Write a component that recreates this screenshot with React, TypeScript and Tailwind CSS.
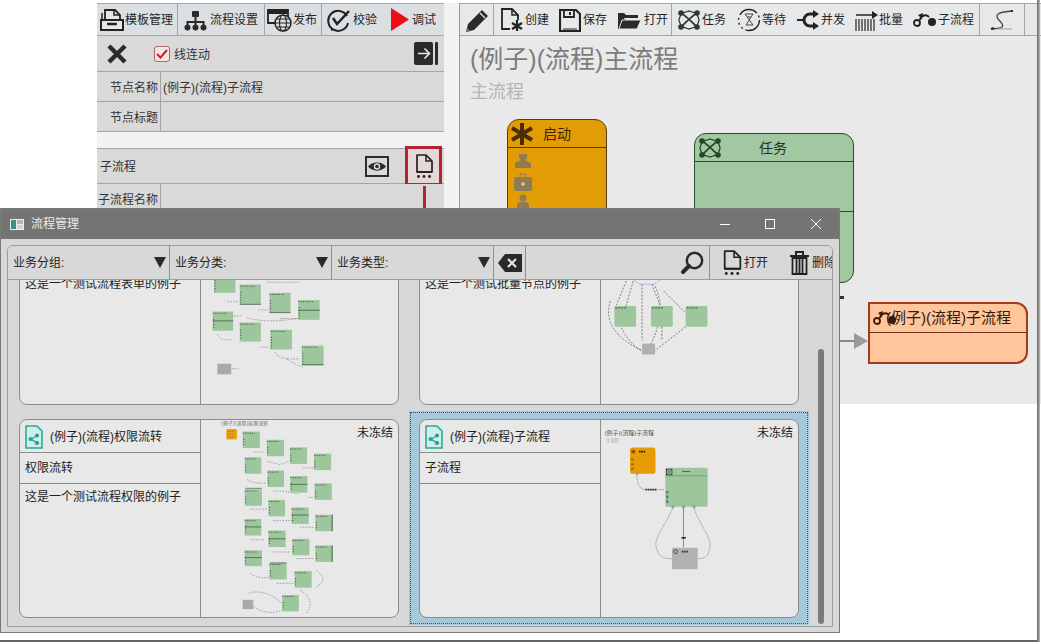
import React from 'react';

const FONT = 'font-["Liberation_Sans","Noto_Sans_CJK_SC",sans-serif]';

const S = ({ w, h, vb, children, className = '' }: { w: number; h: number; vb?: string; children: React.ReactNode; className?: string }) => (
  <svg width={w} height={h} viewBox={vb ?? `0 0 ${w} ${h}`} className={`shrink-0 ${className}`}>{children}</svg>
);

const IconTemplate = () => (
  <S w={24} h={24}>
    <path d="M5 12V2h10l5 5v5" fill="#e6e6e6" stroke="#222" strokeWidth="1.8" />
    <path d="M2 5v7M14 2v5h6" fill="none" stroke="#222" strokeWidth="1.5" />
    <path d="M1 12h22v10H1z" fill="#e6e6e6" stroke="#222" strokeWidth="2" />
    <path d="M7 16h10" stroke="#222" strokeWidth="2.5" />
  </S>
);
const IconOrg = () => (
  <S w={23} h={22}>
    <rect x="8" y="2" width="7" height="6" rx="1" fill="#2a2a2a" />
    <path d="M11.500 8v5M3.500 16v-3h16v3M11.500 13v3" fill="none" stroke="#2a2a2a" strokeWidth="2" />
    <circle cx="3.500" cy="18.500" r="3" fill="#2a2a2a" />
    <circle cx="11.500" cy="18.500" r="3" fill="#2a2a2a" />
    <circle cx="19.500" cy="18.500" r="3" fill="#2a2a2a" />
  </S>
);
const IconPublish = () => (
  <S w={25} h={24}>
    <path d="M8 15H1V2h20v7" fill="none" stroke="#222" strokeWidth="1.800" />
    <path d="M1 4.500h20" stroke="#222" strokeWidth="3" />
    <circle cx="16" cy="15" r="8" fill="#dcdcdc" stroke="#222" strokeWidth="1.500" />
    <ellipse cx="16" cy="15" rx="3.500" ry="8" fill="none" stroke="#222" strokeWidth="1.100" />
    <path d="M8 15h16M9.500 11h13M9.500 19h13" stroke="#222" strokeWidth="1.100" />
  </S>
);
const IconCheck = () => (
  <S w={25} h={24}>
    <path d="M21 8A10 10 0 1 0 22 15" fill="none" stroke="#222" strokeWidth="2" />
    <path d="M7 10l4 6L23 3" fill="none" stroke="#222" strokeWidth="2.500" />
    <path d="M5 20l3 2-3 1z" fill="#222" />
  </S>
);
const IconPlay = () => <S w={18} h={23}><path d="M0 0l18 11.500L0 23z" fill="#ee0a16" /></S>;
const IconX = ({ size = 22, color = '#2b2b2b' }: { size?: number; color?: string }) => (
  <S w={size} h={size} vb="0 0 22 22"><path d="M3 3l16 16M19 3L3 19" stroke={color} strokeWidth="4.500" /></S>
);
const IconExit = () => (
  <S w={24} h={23}>
    <rect x="0" y="0" width="19" height="23" rx="2" fill="#2a2a2a" />
    <rect x="21" y="0" width="3" height="23" rx="1" fill="#2a2a2a" />
    <path d="M4 11.500h11M10.500 6.500l5 5-5 5" fill="none" stroke="#e8e8e8" strokeWidth="1.600" />
  </S>
);
const IconEye = () => (
  <S w={24} h={21}>
    <rect x="0" y="0" width="24" height="21" fill="#2c2c2c" />
    <rect x="2" y="2" width="20" height="17" fill="#d9d9d9" />
    <path d="M3 10.500C7 5 17 5 21 10.500 17 16 7 16 3 10.500z" fill="#2c2c2c" />
    <circle cx="12" cy="10.500" r="3.200" fill="#d9d9d9" />
    <circle cx="12" cy="10.500" r="1.800" fill="#2c2c2c" />
  </S>
);
const IconFileDots = ({ w = 18, h = 24 }: { w?: number; h?: number }) => (
  <S w={w} h={h} vb="0 0 18 24">
    <path d="M2 18V1h9l6 6v11z" fill="none" stroke="#222" strokeWidth="1.700" strokeLinejoin="round" />
    <path d="M11 1v6h6" fill="none" stroke="#222" strokeWidth="1.500" />
    <path d="M2 18h15" stroke="#222" strokeWidth="1.700" />
    <circle cx="3.500" cy="22.500" r="1.400" fill="#222" />
    <circle cx="9" cy="22.500" r="1.400" fill="#222" />
    <circle cx="14.500" cy="22.500" r="1.400" fill="#222" />
  </S>
);
const IconPencil = () => (
  <S w={24} h={26}>
    <path d="M1 25l2-8L17 3l6 6L9 23z" fill="#2c2c2c" />
    <path d="M15 6l5 5" stroke="#e8e8e8" strokeWidth="1.200" />
    <path d="M1 25l1-4 3 3z" fill="#777" />
  </S>
);
const IconCreate = () => (
  <S w={22} h={24}>
    <path d="M9 21H1V1h10l6 6v5" fill="none" stroke="#222" strokeWidth="1.800" />
    <path d="M11 1v6h6" fill="none" stroke="#222" strokeWidth="1.500" />
    <path d="M16 12v11M11 15l10 6M21 15l-10 6" stroke="#222" strokeWidth="2.200" />
  </S>
);
const IconSave = () => (
  <S w={22} h={24}>
    <path d="M1 2h16l4 4v17H1z" fill="none" stroke="#222" strokeWidth="2.200" />
    <path d="M5 2h10v7H5z" fill="none" stroke="#222" strokeWidth="1.800" />
    <path d="M11 4v3" stroke="#222" strokeWidth="2" />
    <path d="M4 21h14" stroke="#222" strokeWidth="1" />
  </S>
);
const IconOpen = () => (
  <S w={25} h={22}>
    <path d="M1 5V20h19l1-9H9" fill="#2a2a2a" />
    <path d="M1 10V4h6l2 2h12v3H7L4 20H1z" fill="#2a2a2a" />
    <path d="M5 11h19l-4 9H2z" fill="#2a2a2a" stroke="#e5e7e9" strokeWidth="1" />
  </S>
);
const IconTask = ({ size = 24, color = '#2b3b2f' }: { size?: number; color?: string }) => (
  <S w={size} h={size} vb="0 0 24 24">
    <path d="M4 5C9 8 15 14 20 19M20 5C15 8 9 14 4 19" fill="none" stroke={color} strokeWidth="1.800" />
    <path d="M4 5c4 0 7-2 8-2s4 2 8 2M4 19c4 0 7 2 8 2s4-2 8-2M4 5c0 3-2 5-2 7s2 4 2 7M20 5c0 3 2 5 2 7s-2 4-2 7" fill="none" stroke={color} strokeWidth="1.300" />
    <circle cx="4" cy="5" r="2.800" fill={color} /><circle cx="20" cy="5" r="2.800" fill={color} />
    <circle cx="4" cy="19" r="2.800" fill={color} /><circle cx="20" cy="19" r="2.800" fill={color} />
  </S>
);
const IconWait = () => (
  <S w={24} h={24}>
    <circle cx="12" cy="12" r="10.500" fill="none" stroke="#222" strokeWidth="1.300" strokeDasharray="20 3 2 3 2 3 2 3" />
    <path d="M8 6h8L9 17h7" fill="none" stroke="#444" strokeWidth="1" />
    <path d="M8 6l8 11" fill="none" stroke="#444" strokeWidth="1" />
    <path d="M10 8h4l-2 3z" fill="#888" />
  </S>
);
const IconFork = () => (
  <S w={24} h={22}>
    <path d="M1 11h7" stroke="#222" strokeWidth="2" />
    <path d="M18 5h-4a6 6 0 0 0 0 12h4" fill="none" stroke="#222" strokeWidth="3" />
    <path d="M17 1l6 4-6 4zM17 13l6 4-6 4z" fill="#222" />
  </S>
);
const IconBatch = () => (
  <S w={24} h={24}>
    <path d="M2 7h18" stroke="#222" strokeWidth="1.500" />
    <path d="M18 3l6 4-6 4z" fill="#222" />
    <path d="M2 11v12M5 11v12M8 11v12M11 11v12M14 11v12M17 11v12M20 11v12" stroke="#333" strokeWidth="1.300" />
  </S>
);
const IconSub = ({ color = '#222' }: { color?: string }) => (
  <S w={24} h={16}>
    <circle cx="4" cy="11" r="3" fill="none" stroke={color} strokeWidth="1.800" />
    <path d="M7 8C8 3 13 2 16 5" fill="none" stroke={color} strokeWidth="2" />
    <path d="M10 1L5 3l4 4z" fill={color} />
    <circle cx="19" cy="10" r="4" fill={color} />
  </S>
);
const IconCurve = () => (
  <S w={24} h={24}>
    <path d="M2 21C14 20 16 19 8 11 4 5 12 4 22 3" fill="none" stroke="#444" strokeWidth="1.300" />
    <path d="M1 21l3-1M21 3l2 0" stroke="#222" strokeWidth="2" />
    <path d="M8 21h14" stroke="#999" strokeWidth="1" />
  </S>
);
const IconAsterisk = () => (
  <S w={24} h={24}>
    <path d="M12 1v22M2 6l20 12M22 6L2 18" stroke="#4b2d05" strokeWidth="4" />
  </S>
);
const IconSearch = () => (
  <S w={24} h={24}>
    <circle cx="14.500" cy="9.500" r="7.700" fill="none" stroke="#2a2a2a" strokeWidth="2.500" />
    <path d="M9 15l-6 6" stroke="#2a2a2a" strokeWidth="4" strokeLinecap="round" />
  </S>
);
const IconTrash = () => (
  <S w={19} h={24}>
    <path d="M0 5h19M6 4V1h7v3" fill="none" stroke="#222" strokeWidth="2" />
    <path d="M2.500 7h14v16h-14z" fill="none" stroke="#222" strokeWidth="1.800" />
    <path d="M6.500 8v14M9.500 8v14M12.500 8v14" stroke="#222" strokeWidth="1.800" />
  </S>
);
const IconBackspace = () => (
  <S w={24} h={18}>
    <path d="M7 0h17v18H7L0 9z" fill="#2a2a2a" />
    <path d="M10 5l8 8M18 5l-8 8" stroke="#e8e8e8" strokeWidth="2" />
  </S>
);
const IconDocShare = () => (
  <S w={18} h={24}>
    <path d="M1 1h11l5 5v17H1z" fill="#cfeee9" stroke="#2ba89a" strokeWidth="1.600" />
    <path d="M12 11l-6 3 6 4" fill="none" stroke="#20a090" strokeWidth="1.300" />
    <circle cx="12" cy="10.500" r="2" fill="#20a090" /><circle cx="5.500" cy="14" r="2" fill="#20a090" /><circle cx="12" cy="18" r="2" fill="#20a090" />
  </S>
);
const IconApp = () => (
  <S w={14} h={11}>
    <rect width="14" height="11" fill="#e9eef0" />
    <rect x="1" y="1" width="5" height="9" fill="#3e8e8a" />
    <rect x="7" y="1" width="6" height="4" fill="#a9b6bd" />
    <rect x="7" y="6" width="6" height="4" fill="#c9d3d8" />
  </S>
);
const IconDropdown = () => <S w={12} h={11}><path d="M0 0h12L6 11z" fill="#2b2b2b" /></S>;

const ToolItem = ({ icon, label, gap = 'gap-[2px]' }: { icon: React.ReactNode; label: string; gap?: string }) => (
  <div className={`flex items-center ${gap} whitespace-nowrap text-xs text-[#262626]`}>
    {icon}
    <span>{label}</span>
  </div>
);

const Row = ({ label, value, h }: { label: string; value?: string; h: string }) => (
  <div className={`flex ${h} items-center border-b border-[#a5a5a5] text-xs text-[#333]`}>
    <div className="flex h-full w-[64px] items-center justify-end border-r border-[#a5a5a5] pr-[2px] pt-[2px]">{label}</div>
    <div className="pl-[2px] pt-[2px]">{value}</div>
  </div>
);

const LeftPanel = () => (
  <div className="flex w-[347px] shrink-0 flex-col">
    <div className="flex h-[33px] items-center border-y border-[#a5a5a5] bg-[#dcdfe2]">
      <div className="flex h-full w-[81px] items-center border-r border-[#a5a5a5] pl-[3px]"><ToolItem icon={<IconTemplate />} label="模板管理" gap="gap-[1px]" /></div>
      <div className="flex h-full w-[87px] items-center border-r border-[#a5a5a5] pl-[6px]"><ToolItem icon={<IconOrg />} label="流程设置" gap="gap-[3px]" /></div>
      <div className="flex h-full w-[57px] items-center border-r border-[#a5a5a5] pl-[2px]"><ToolItem icon={<IconPublish />} label="发布" gap="gap-[1px]" /></div>
      <div className="flex h-full flex-1 items-center gap-[14px] pl-[4px]">
        <ToolItem icon={<IconCheck />} label="校验" />
        <ToolItem icon={<IconPlay />} label="调试" gap="gap-[3px]" />
      </div>
    </div>
    <div className="flex h-[36px] items-center border-b border-[#a5a5a5] bg-[#d9d9d9] pl-[9px] pr-[6px] text-xs text-[#333]">
      <IconX />
      <div className="ml-[26px] flex h-[16px] w-[16px] items-center justify-center rounded-[3px] border border-[#a86a6a] bg-[#f4e4e4]">
        <svg width="12" height="10" viewBox="0 0 12 10"><path d="M1 5l3.500 3.500L11 1" fill="none" stroke="#d0202c" strokeWidth="2" /></svg>
      </div>
      <span className="ml-[4px] pt-[3px]">线连动</span>
      <div className="ml-auto"><IconExit /></div>
    </div>
    <div className="bg-[#d9d9d9]">
      <Row label="节点名称" value="(例子)(流程)子流程" h="h-[30px]" />
      <Row label="节点标题" h="h-[30px]" />
    </div>
    <div className="h-[16px] bg-[#f2f2f2]" />
    <div className="flex h-[36px] items-center border-y border-[#a5a5a5] bg-[#d9d9d9] text-xs text-[#333]">
      <span className="pl-[3px] pt-[2px]">子流程</span>
      <div className="ml-auto mr-[16px]"><IconEye /></div>
      <div className="mr-[2px] flex h-[40px] w-[37px] items-center justify-center border-[3px] border-[#b32334] bg-[#e6d8d8]"><IconFileDots /></div>
    </div>
    <div className="flex h-[40px] border-b border-[#a5a5a5] bg-[#d9d9d9] text-xs text-[#333]">
      <div className="flex h-[30px] w-[64px] items-center justify-end border-r border-[#a5a5a5] pr-[2px] pt-[2px]">子流程名称</div>
    </div>
  </div>
);

const NodeMini = ({ kind }: { kind: number }) => (
  <svg width="20" height="19" viewBox="0 0 20 19" className="block">
    {kind === 0 && <path d="M6 2h8v4l-2 2 6 3v5H2v-5l6-3-2-2z" fill="#8f7c55" />}
    {kind === 1 && <><rect x="1" y="4" width="18" height="14" rx="2" fill="#8f7c55" /><path d="M7 4V1h6v3" fill="none" stroke="#8f7c55" /><path d="M8 11h4M10 9v4" stroke="#e3c98a" strokeWidth="1.300" /></>}
    {kind === 2 && <><circle cx="10" cy="4" r="3.500" fill="#8f7c55" /><path d="M4 19V11q0-3 6-3t6 3v8z" fill="#8f7c55" /></>}
  </svg>
);

const RightPanel = () => (
  <div className="relative h-[401px] flex-1 overflow-hidden border-l border-[#9a9a9a] bg-[#e9e9e9]">
    <div className="flex h-[33px] border-y border-[#a5a5a5] bg-[#e6e8ea]">
      <div className="flex w-[34px] items-center justify-center border-r border-[#a5a5a5]"><IconPencil /></div>
      <div className="flex w-[178px] items-center gap-[10px] border-r border-[#a5a5a5] pl-[7px]">
        <ToolItem icon={<IconCreate />} label="创建" />
        <ToolItem icon={<IconSave />} label="保存" />
        <ToolItem icon={<IconOpen />} label="打开" />
      </div>
      <div className="flex w-[308px] items-center gap-[10px] border-r border-[#a5a5a5] pl-[5px]">
        <ToolItem icon={<IconTask />} label="任务" gap="gap-[1px]" />
        <div className="ml-[1px]"><ToolItem icon={<IconWait />} label="等待" gap="gap-[1px]" /></div>
        <ToolItem icon={<IconFork />} label="并发" gap="gap-[1px]" />
        <div className="-ml-[1px]"><ToolItem icon={<IconBatch />} label="批量" gap="gap-[1px]" /></div>
        <ToolItem icon={<IconSub />} label="子流程" gap="gap-[1px]" />
      </div>
      <div className="flex w-[45px] items-center justify-center border-r border-[#a5a5a5]"><IconCurve /></div>
    </div>
    <div className="pl-[10px] pt-[8px]">
      <div className="text-[25px] leading-[30px] text-[#7c7c7c]">(例子)(流程)主流程</div>
      <div className="mt-[6px] text-[18px] leading-[24px] text-[#b5b5b5]">主流程</div>
    </div>

    <div className="absolute left-[47px] top-[116px] w-[100px] overflow-hidden rounded-xl rounded-b-none border border-[#5b3b08] bg-[#e29c05]">
      <div className="flex h-[28px] items-center border-b border-[#5b3b08] pl-[2px]">
        <IconAsterisk />
        <span className="ml-[9px] text-sm text-[#3a2504]">启动</span>
      </div>
      <div className="flex h-[75px] flex-col gap-[2px] pl-[5px] pt-[4px]">
        <NodeMini kind={0} /><NodeMini kind={1} /><NodeMini kind={2} />
      </div>
    </div>

    <div className="absolute left-[234px] top-[130px] w-[160px] overflow-hidden rounded-xl border border-[#2d4a2f] bg-[#a1c8a1]">
      <div className="flex h-[28px] items-center border-b border-[#2d4a2f] pl-[3px]">
        <IconTask color="#24492a" />
        <span className="ml-[37px] text-sm text-[#26331f]">任务</span>
      </div>
      <div className="h-[50px] border-b border-[#2d4a2f]" />
      <div className="h-[70px]" />
    </div>
    <div className="absolute left-[380px] top-[293px] h-[3px] w-[4px] bg-[#333]" />

    <div className="absolute left-[380px] top-[337px] h-[2px] w-[16px] bg-[#8a8a8a]" />
    <svg width="14" height="16" viewBox="0 0 14 16" className="absolute left-[394px] top-[330px]"><path d="M0 0l14 8-14 8z" fill="#9a9a9a" /></svg>

    <div className="absolute left-[408px] top-[299px] w-[160px] rounded-xl rounded-l-none border-2 border-[#a53a1c] bg-[#ffc69b]">
      <div className="flex h-[29px] items-center border-b border-[#6a2a14] pl-[3px]">
        <IconSub color="#3a1a0c" />
        <span className="-ml-[11px] text-[15px] text-[#33190c]">(例子)(流程)子流程</span>
      </div>
      <div className="h-[29px]" />
    </div>
  </div>
);

type R = [number, number, number, number];

const Dash = ({ d, c = '#333', w = 1.2 }: { d: string; c?: string; w?: number }) => (
  <path d={d} fill="none" stroke={c} strokeWidth={w} strokeDasharray="5 4" />
);
const Green = ({ r, edge = true }: { r: R; edge?: boolean }) => (
  <g>
    <rect x={r[0]} y={r[1]} width={r[2]} height={r[3]} fill="#9dc69d" />
    <path d={`M${r[0]} ${r[1] + 5}h${r[2] * 0.7}`} stroke="#333" strokeWidth="2" strokeDasharray="4 3" />
    {edge && <path d={`M${r[0] + 3} ${r[1] + 22}v${r[3] - 26}`} stroke="#444" strokeWidth="3" strokeDasharray="3 5" />}
  </g>
);

const permNodes: R[] = [[727,60,52,50],[800,85,52,50],[870,108,52,50],[943,127,52,50],[733,138,50,50],[802,178,50,50],[871,195,52,50],[945,217,52,50],[733,235,52,50],[805,267,50,50],[875,290,52,50],[947,312,52,50],[733,325,50,50],[805,360,52,50],[877,385,52,50],[947,405,52,50],[733,420,52,48],[808,458,52,50],[884,483,52,50],[847,555,50,50]];
const permEdges = ['M760 122h30','M800 150l40 10 30 -10','M910 170h40','M740 205q20 15 60 10','M820 240q40 0 80 10','M925 260h20','M750 295h50','M820 330h60','M900 350h45','M750 388h45','M820 425h50','M890 445h50','M750 490q30 20 60 10','M830 520h50','M950 480q40 30 0 50','M745 550q50 -15 100 30','M760 590q40 30 90 10','M900 540q50 30 20 70'];
const ThumbPermission = () => (
  <svg viewBox="602 25 594 597" className="block h-full w-full">
    <text x="662" y="40" fontSize="14" fill="#666" letterSpacing="1">(例子)(流程)权限流转</text>
    <rect x="677" y="52" width="33" height="32" rx="5" fill="#e8a10f" />
    <path d="M683 60h18M683 68h18M683 76h18" stroke="#7a5208" strokeWidth="2" strokeDasharray="3 3" />
    {permEdges.map((d) => <Dash key={d} d={d} />)}
    {permNodes.map((r) => <Green key={r.join()} r={r} />)}
    <path d="M735 232h50M875 313h52M805 385h52M733 349h50M733 442h52M810 458h50M871 220h52" stroke="#2f4a2f" strokeWidth="2" />
    <path d="M998 312v50M998 405v50" stroke="#222" strokeWidth="2" />
    <rect x="727" y="570" width="32" height="28" fill="#a9a9a9" />
  </svg>
);

const formNodes: R[] = [[640,200,65,60],[718,235,64,60],[808,260,64,60],[895,282,65,60],[636,317,62,58],[718,350,64,58],[811,372,65,60],[906,420,66,60]];
const ThumbForm = () => (
  <svg viewBox="602 0 594 597" className="block h-full w-full">
    {['M800 228h100','M680 287h35','M775 312h30','M840 338h55','M700 330h25','M740 335q60 20 170 0','M650 385q10 25 45 15','M780 425h28','M825 440q10 25 75 20','M860 460q30 20 50 25','M695 490h20'].map((d) => <Dash key={d} d={d} />)}
    {formNodes.map((r) => <Green key={r.join()} r={r} />)}
    <path d="M636 345h62M895 313h65M808 320h64M718 295h64M906 478h66" stroke="#2f4a2f" strokeWidth="2" />
    <rect x="650" y="475" width="42" height="32" fill="#a9a9a9" />
  </svg>
);

const ThumbBatch = () => (
  <svg viewBox="601 205 198 199" className="block h-full w-full">
    <path d="M634 279l6 4h14l6-4" fill="none" stroke="#b39adf" strokeWidth="1" strokeDasharray="1.500 1" />
    {['M626 280L616 304','M633 280L620 325Q630 345 642 350','M610 300Q600 330 642 350','M642 283V340','M652 283L660 304','M664 290L686 312','M662 326V340','M686 326L655 350','M655 285Q668 310 650 345'].map((d) => <path key={d} d={d} fill="none" stroke="#333" strokeWidth="0.600" strokeDasharray="2 1.500" />)}
    {[[614,305],[651,305],[686,305]].map(([x, y]) => (
      <g key={x}>
        <rect x={x} y={y} width="22" height="21" rx="1.500" fill="#9dc69d" />
        <path d={`M${x + 1} ${y + 2}h12`} stroke="#333" strokeWidth="0.800" strokeDasharray="2 1" />
      </g>
    ))}
    <rect x="642" y="343" width="13" height="11" fill="#b0b0b0" />
  </svg>
);

const ThumbSub = () => (
  <svg viewBox="587 25 593 597" className="block h-full w-full">
    <text x="596" y="70" fontSize="18" fill="#555">(例子)(流程)子流程</text>
    <text x="600" y="92" fontSize="13" fill="#aaa">主流程</text>
    <rect x="673" y="108" width="77" height="80" rx="8" fill="#e79c06" />
    <path d="M676 121l14 0M683 114v14M678 116l10 10M688 116l-10 10" stroke="#5b3b08" strokeWidth="2" />
    <path d="M700 121h20" stroke="#222" strokeWidth="5" strokeDasharray="5 2" />
    <path d="M680 142v6M680 156v6M680 170v6" stroke="#8a6510" strokeWidth="7" />
    <rect x="780" y="170" width="128" height="118" rx="3" fill="#9dc69d" />
    <path d="M780 194h128" stroke="#55785a" strokeWidth="1.500" />
    <rect x="783" y="174" width="17" height="17" fill="none" stroke="#222" strokeWidth="2" />
    <path d="M785 176l13 13M798 176l-13 13" stroke="#222" strokeWidth="1.500" />
    <path d="M832 181h22" stroke="#333" strokeWidth="3" strokeDasharray="4 2" />
    <path d="M786 240v8M786 254v8M786 268v8" stroke="#666" strokeWidth="6" />
    <path d="M694 188c0 40 10 48 32 48h50" fill="none" stroke="#555" strokeWidth="1.500" strokeDasharray="5 2" />
    <path d="M720 236h34" stroke="#333" strokeWidth="6" strokeDasharray="5 2" />
    <path d="M803 290C780 345 745 380 752 410S775 445 800 445" fill="none" stroke="#444" strokeWidth="1.500" strokeDasharray="3 2" />
    <path d="M866 290C885 345 920 380 915 410S900 445 878 445" fill="none" stroke="#444" strokeWidth="1.500" strokeDasharray="3 2" />
    <path d="M835 290V410" stroke="#888" strokeWidth="3" />
    <path d="M829 382h13" stroke="#222" strokeWidth="5" />
    {[803, 835, 867].map((x) => <circle key={x} cx={x} cy={288} r="5" fill="#8da08d" />)}
    <circle cx="694" cy="188" r="4" fill="#999" />
    <rect x="800" y="412" width="78" height="65" rx="3" fill="#b2b2b2" />
    <circle cx="811" cy="424" r="6" fill="none" stroke="#222" strokeWidth="2" />
    <path d="M830 424h20" stroke="#333" strokeWidth="5" strokeDasharray="5 2" />
  </svg>
);

const Card = ({ title, sub, desc, frozen, thumb, selected }: { title?: string; sub?: string; desc: string; frozen?: boolean; thumb: React.ReactNode; selected?: boolean }) => {
  const body = (
    <div className="flex h-[199px] w-[380px] overflow-hidden rounded-lg border border-[#8c8c8c] bg-[#e8e8e8] text-xs text-[#222]">
      <div className="flex w-[181px] shrink-0 flex-col border-r border-[#8c8c8c]">
        {title ? (
          <>
            <div className="flex h-[33px] items-center gap-[7px] border-b border-[#8c8c8c] pl-[5px] pt-[1px]">
              <IconDocShare /><span className="pt-[1px]">{title}</span>
            </div>
            <div className="flex h-[31px] items-center border-b border-[#8c8c8c] pl-[5px]">{sub}</div>
            <div className="pl-[5px] pt-[4px] leading-[18px]">{desc}</div>
          </>
        ) : (
          <>
            <div className="h-[64px]" />
            <div className="pl-[5px] pt-[4px] leading-[18px]">{desc}</div>
          </>
        )}
      </div>
      <div className="relative min-w-0 flex-1">
        {thumb}
        {frozen && <span className="absolute right-[5px] top-[5px]">未冻结</span>}
      </div>
    </div>
  );
  return selected ? (
    <div className="-mx-[10px] -mb-[7px] -mt-[8px] bg-[#a6c8da] p-[1px]">
      <div className="border border-dotted border-[#1f5f82] px-[8px] pb-[5px] pt-[6px]">{body}</div>
    </div>
  ) : body;
};

const Win = () => (
  <div className="absolute left-0 top-[208px] flex h-[425px] w-[840px] flex-col border border-[#7a7a7a] bg-[#d8d8d8]">
    <div className="flex h-[30px] shrink-0 items-center bg-[#747474] pl-[9px] text-xs text-[#ececec]">
      <IconApp />
      <span className="ml-[7px]">流程管理</span>
      <div className="ml-auto flex items-center">
        <div className="mr-[35px] h-px w-[10px] bg-white" />
        <div className="mr-[35px] h-[10px] w-[10px] border border-white" />
        <svg width="12" height="12" viewBox="0 0 12 12" className="mr-[17px]"><path d="M1 1l10 10M11 1L1 11" stroke="#fff" strokeWidth="1" /></svg>
      </div>
    </div>
    <div className="mx-[6px] mb-[5px] mt-[6px] flex min-h-0 flex-1 flex-col overflow-hidden rounded-t-md border border-[#9b9b9b]">
      <div className="relative z-10 flex h-[34px] shrink-0 items-center overflow-hidden border-b border-[#9b9b9b] bg-[#d8d8d8] text-xs text-[#222]">
        <div className="flex h-full w-[162px] shrink-0 items-center justify-between border-r border-[#8f8f8f] pl-[5px] pr-[3px]"><span>业务分组:</span><IconDropdown /></div>
        <div className="flex h-full w-[162px] shrink-0 items-center justify-between border-r border-[#8f8f8f] pl-[5px] pr-[3px]"><span>业务分类:</span><IconDropdown /></div>
        <div className="flex h-full w-[162px] shrink-0 items-center justify-between border-r border-[#8f8f8f] pl-[5px] pr-[3px]"><span>业务类型:</span><IconDropdown /></div>
        <div className="flex h-full w-[32px] shrink-0 items-center justify-center border-r border-[#8f8f8f]"><IconBackspace /></div>
        <div className="flex h-full w-[184px] shrink-0 items-center justify-end border-r border-[#8f8f8f] pr-[5px]"><IconSearch /></div>
        <div className="ml-[12px] flex shrink-0 items-center gap-[2px] whitespace-nowrap"><IconFileDots w={20} h={25} /><span>打开</span></div>
        <div className="ml-[22px] flex shrink-0 items-center gap-[3px] whitespace-nowrap"><IconTrash /><span>删除</span></div>
      </div>
      <div className="relative min-h-0 flex-1 overflow-hidden bg-[#d8d8d8]">
        <div className="-mt-[74px] grid w-[800px] grid-cols-[380px_380px] gap-x-[20px] gap-y-[14px] pl-[11px]">
          <Card desc="这是一个测试流程表单的例子" thumb={<ThumbForm />} />
          <Card desc="这是一个测试批量节点的例子" thumb={<ThumbBatch />} />
          <Card title="(例子)(流程)权限流转" sub="权限流转" desc="这是一个测试流程权限的例子" frozen thumb={<ThumbPermission />} />
          <Card title="(例子)(流程)子流程" sub="子流程" desc="" frozen selected thumb={<ThumbSub />} />
        </div>
        <div className="absolute bottom-[2px] right-[8px] top-[69px] w-[6px] rounded-full bg-[#7a7a7a]" />
      </div>
    </div>
  </div>
);

export default function App() {
  return (
    <div className={`relative h-[644px] w-[1041px] overflow-hidden bg-white ${FONT}`}>
      <div className="flex pl-[97px] pt-[3px]">
        <LeftPanel />
        <div className="h-[401px] w-[15px] shrink-0 bg-[#f2f2f2]" />
        <RightPanel />
      </div>
      <div className="absolute left-[423px] top-[186px] h-[24px] w-[3px] bg-[#b32334]" />
      <Win />
      <div className="absolute bottom-[2px] left-0 h-[2px] w-[1040px] bg-[#666] blur-[0.5px]" />
      <div className="absolute bottom-[2px] right-[1px] top-0 w-[3px] bg-gradient-to-r from-[#666] to-[#bbb]" />
    </div>
  );
}
